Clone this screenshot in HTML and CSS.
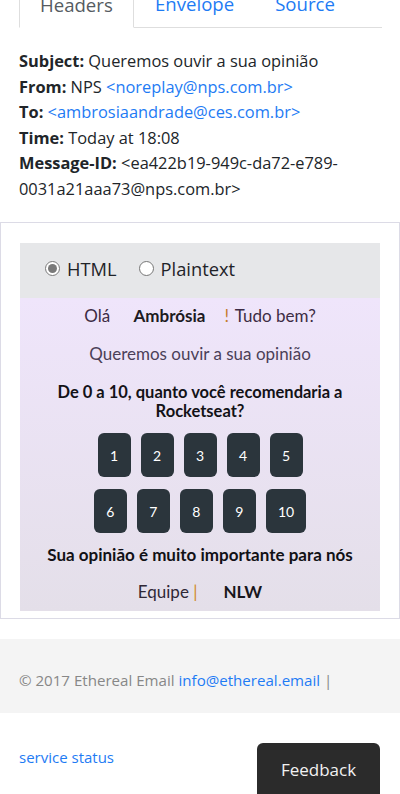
FILE: index.html
```html
<!DOCTYPE html>
<html lang="pt">
<head>
<meta charset="utf-8">
<title>Ethereal Email</title>
<link rel="stylesheet" href="styles.css">
</head>
<body>
<div class="wrap">
  <nav class="tabs">
    <span class="tab active">Headers</span>
    <a class="tab" href="#">Envelope</a>
    <a class="tab" href="#">Source</a>
  </nav>

  <div class="headers">
    <div><b>Subject:</b> Queremos ouvir a sua opinião</div>
    <div><b>From:</b> NPS <a href="#">&lt;noreplay@nps.com.br&gt;</a></div>
    <div><b>To:</b> <a href="#">&lt;ambrosiaandrade@ces.com.br&gt;</a></div>
    <div><b>Time:</b> Today at 18:08</div>
    <div><b>Message-ID:</b> &lt;ea422b19-949c-da72-e789-0031a21aaa73@nps.com.br&gt;</div>
  </div>
</div>

<section class="frame">
  <div class="modes">
    <label class="mode"><span class="radio checked"></span>HTML</label>
    <label class="mode"><span class="radio"></span>Plaintext</label>
  </div>
  <div class="mail">
    <p class="hello">Olá <span class="name">Ambrósia</span><span class="bang">!</span> Tudo bem?</p>
    <p class="sub">Queremos ouvir a sua opinião</p>
    <p class="question">De 0 a 10, quanto você recomendaria a Rocketseat?</p>
    <div class="scores">
      <a class="score" href="#">1</a><a class="score" href="#">2</a><a class="score" href="#">3</a><a class="score" href="#">4</a><a class="score" href="#">5</a>
    </div>
    <div class="scores">
      <a class="score" href="#">6</a><a class="score" href="#">7</a><a class="score" href="#">8</a><a class="score" href="#">9</a><a class="score" href="#">10</a>
    </div>
    <p class="important">Sua opinião é muito importante para nós</p>
    <p class="team">Equipe <span class="bar">|</span><span class="nlw">NLW</span></p>
  </div>
</section>

<footer class="foot">
  © 2017 Ethereal Email <a href="#">info@ethereal.email</a> |
</footer>

<div class="status-row">
  <a href="#">service status</a>
</div>

<button class="feedback">Feedback</button>
</body>
</html>
```

FILE: styles.css
```css
* { box-sizing: border-box; }

html, body {
  margin: 0;
  padding: 0;
  background: #fff;
}

body {
  font-family: "Open Sans", "Noto Sans", sans-serif;
  font-size: 15px;
  color: #212529;
  overflow: hidden;
  height: 794px;
}

a { color: #1e7bf4; text-decoration: none; }

.wrap {
  padding: 0 18px 0 19px;
}

.tabs {
  display: flex;
  margin-top: -16px;
  border-bottom: 1px solid #dedede;
  height: 44px;
}

.tab {
  display: block;
  font-size: 18.6px;
  line-height: 40px;
  padding: 0 20px;
  height: 44px;
}

.tab.active {
  color: #555b61;
  border: 1px solid #dedede;
  border-bottom-color: #fff;
  background: #fff;
  height: 44px;
  margin-bottom: -1px;
  width: 115px;
}

.tab + .tab { margin-left: 1px; }

.headers {
  margin-top: 20px;
  line-height: 25.5px;
  font-size: 16.4px;
}

.headers b { font-weight: 700; }

.frame {
  margin-top: 21px;
  border: 1px solid #dcdbe6;
  padding: 20px 19px 7px 19px;
}

.modes {
  background: #e6e7e9;
  height: 55px;
  display: flex;
  align-items: center;
  padding: 0 0 4px 25px;
  gap: 22px;
  font-size: 18.3px;
  color: #1f2328;
}

.mode {
  display: flex;
  align-items: center;
}

.radio {
  width: 15px;
  height: 15px;
  border-radius: 50%;
  border: 1px solid #767676;
  background: #fff;
  margin-right: 7px;
  position: relative;
}

.radio.checked {
  border-color: #7a7a7a;
}

.radio.checked::after {
  content: "";
  position: absolute;
  left: 2px;
  top: 2px;
  width: 9px;
  height: 9px;
  border-radius: 50%;
  background: #7a7a7a;
}

.mail {
  background: linear-gradient(#efe5fb, #e4dfe9);
  text-align: center;
  padding: 8px 0 9px;
  font-family: "Lato", "Open Sans", sans-serif;
}

.mail p { margin: 0; }

.hello {
  line-height: 20px;
  font-size: 17px;
  color: #3d2c44;
}

.name {
  font-weight: 700;
  color: #1d1b22;
  margin: 0 19px 0 19px;
}

.bang { color: #c47c2a; margin-right: 2px; }

.sub {
  margin-top: 18px !important;
  line-height: 20px;
  font-size: 17px;
  color: #4b3f58;
}

.question {
  margin: 19px 24px 0 !important;
  line-height: 19px;
  font-size: 16.5px;
  font-weight: 700;
  color: #131217;
}

.scores {
  margin-top: 12px;
  display: flex;
  justify-content: center;
  gap: 10px;
}

.score {
  display: flex;
  align-items: center;
  justify-content: center;
  min-width: 33px;
  height: 44px;
  padding: 0 12px;
  background: #2b353c;
  color: #fff;
  border-radius: 6px;
  font-size: 14px;
}

.important {
  margin-top: 12px !important;
  line-height: 20px;
  font-size: 17px;
  font-weight: 700;
  color: #121116;
}

.team {
  margin-top: 17px !important;
  line-height: 20px;
  font-size: 17px;
  color: #2f2836;
}

.bar { color: #d08a2a; }

.nlw {
  font-weight: 700;
  color: #18161c;
  margin-left: 26px;
}

.foot {
  margin-top: 20px;
  background: #f4f4f4;
  padding: 31px 19px 23px;
  line-height: 20px;
  font-size: 15.1px;
  color: #878787;
}

.status-row {
  padding: 34px 19px 0;
  line-height: 20px;
  font-size: 15px;
}

.feedback {
  position: fixed;
  right: 20px;
  bottom: -10px;
  width: 123px;
  height: 61px;
  border: none;
  border-radius: 6px;
  background: #2b2b2b;
  color: #f2f2f2;
  font-family: "Open Sans", "Noto Sans", sans-serif;
  font-size: 17px;
  padding: 0 0 8px;
}
```
